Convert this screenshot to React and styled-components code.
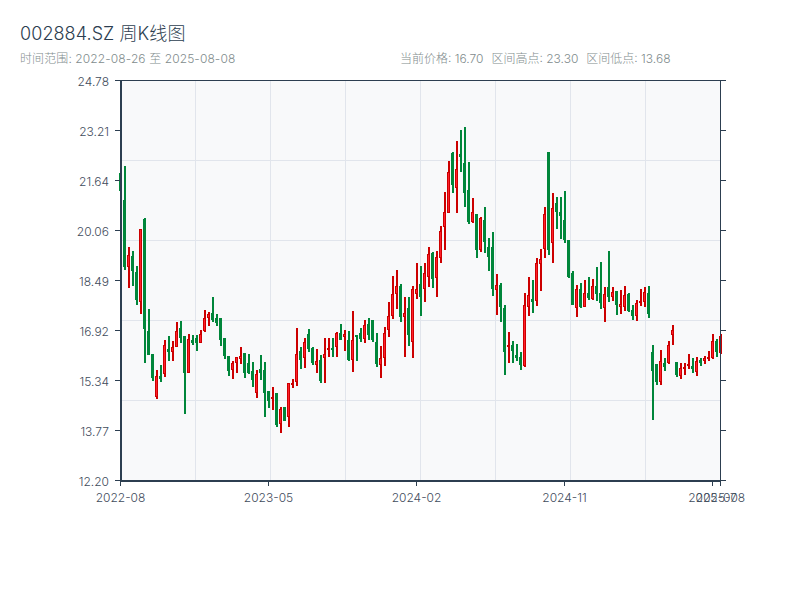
import styled, { createGlobalStyle } from 'styled-components'

const GlobalStyle = createGlobalStyle`
  html, body {
    margin: 0;
    padding: 0;
    background: #fff;
    font-family: "Inter", "Noto Sans CJK SC", sans-serif;
  }
`

const Page = styled.div`
  width: 800px;
  height: 600px;
  overflow: hidden;
`

const Header = styled.header`
  height: 70px;
  box-sizing: border-box;
  padding: 22px 20px 0;
`

const Title = styled.h1`
  margin: 0;
  font-size: 18px;
  line-height: 24px;
  font-weight: 300;
  letter-spacing: 0.08px;
  color: #2c3e50;
`

const Meta = styled.div`
  display: grid;
  grid-template-columns: 380px 380px;
  margin-top: 4px;
  font-size: 12px;
  line-height: 18px;
  font-weight: 300;
  color: #7f8c8d;
`

const Range = styled.span`
  letter-spacing: 0.1px;
`

const Stats = styled.div`
  display: flex;
  gap: 8px;
`

const Chart = styled.svg`
  display: block;
`

const Plot = styled.rect`
  fill: #f8f9fa;
`

const GridLine = styled.line`
  stroke: #e1e5ec;
  stroke-width: 1;
`

const AxisLine = styled.line`
  stroke: #2c3e50;
  stroke-width: ${(p) => p.$w || 1};
`

const AxisLabel = styled.text`
  font-size: 12px;
  font-weight: 300;
  fill: #3f4c5c;
`

const Wick = styled.rect`
  fill: ${(p) => (p.$up ? '#cc0000' : '#00863a')};
`

const Body = styled.rect`
  fill: ${(p) => (p.$up ? '#cc0000' : '#00863a')};
`

const BodyCore = styled.rect`
  fill: #ff1f2b;
`

// y in pixels of the plot: high, body top, body bottom, low, r/g
const candles = [
  [173,173,191,191,'g'],[166,200,267,270,'g'],[247,255,267,288,'r'],[251,256,271,286,'g'],[266,272,300,305,'g'],
  [229,229,302,314,'r'],[218,219,329,363,'g'],[309,331,355,355,'g'],[354,354,378,381,'g'],[370,376,397,399,'r'],
  [365,376,379,382,'g'],[340,345,374,377,'r'],[336,349,352,361,'g'],[341,347,352,361,'r'],[322,331,347,347,'r'],
  [321,328,338,343,'g'],[336,336,373,414,'g'],[334,339,373,373,'r'],[335,340,343,345,'g'],[335,338,343,351,'g'],
  [330,334,343,343,'r'],[310,318,331,332,'r'],[312,314,318,326,'r'],[297,313,320,322,'g'],[314,318,323,326,'g'],
  [318,318,340,346,'g'],[338,338,356,359,'g'],[356,356,371,376,'g'],[361,363,370,379,'r'],[357,357,363,373,'r'],
  [347,356,359,364,'r'],[353,353,373,378,'g'],[354,363,373,374,'g'],[362,371,380,387,'g'],[370,374,393,398,'r'],
  [355,369,373,380,'g'],[362,370,393,417,'g'],[391,391,401,408,'g'],[387,397,399,410,'r'],[393,393,425,427,'g'],
  [407,409,424,433,'r'],[407,407,421,421,'g'],[383,383,417,427,'r'],[379,383,385,388,'r'],[328,354,382,386,'r'],
  [347,351,360,369,'g'],[338,342,358,368,'r'],[329,334,349,352,'g'],[347,348,363,365,'g'],[349,361,365,373,'r'],
  [355,360,381,383,'g'],[338,354,358,383,'r'],[338,348,350,357,'r'],[338,348,350,357,'g'],[332,333,347,357,'r'],
  [324,333,340,340,'g'],[330,334,337,351,'r'],[331,340,360,361,'g'],[311,340,360,372,'r'],[335,335,337,361,'g'],
  [328,333,339,342,'g'],[320,325,339,343,'r'],[318,324,335,340,'g'],[320,320,340,342,'g'],[333,342,364,367,'g'],
  [346,358,365,378,'r'],[327,333,358,366,'r'],[302,316,330,337,'r'],[276,294,316,319,'r'],[270,286,294,309,'r'],
  [284,286,317,322,'g'],[297,313,317,357,'r'],[297,308,335,346,'g'],[286,289,342,358,'r'],[263,289,294,299,'r'],
  [266,284,297,316,'g'],[263,273,289,302,'r'],[247,254,277,287,'r'],[252,253,279,288,'g'],[251,257,278,297,'r'],
  [226,231,258,263,'r'],[192,212,227,250,'r'],[161,172,213,213,'r'],[152,153,185,193,'g'],[141,169,188,213,'r'],
  [130,154,157,172,'g'],[127,163,193,207,'g'],[162,190,222,224,'g'],[198,212,222,223,'r'],[214,214,250,258,'g'],
  [217,218,250,252,'r'],[207,220,242,253,'g'],[238,247,257,271,'g'],[232,247,289,296,'g'],[274,285,290,315,'r'],
  [283,285,307,322,'g'],[305,308,352,375,'g'],[332,345,347,363,'r'],[341,345,351,363,'g'],[344,355,358,361,'g'],
  [352,357,365,370,'g'],[293,305,366,367,'r'],[277,295,307,316,'r'],[280,299,302,313,'g'],[258,263,301,306,'r'],
  [249,259,264,291,'r'],[207,214,249,258,'r'],[152,152,250,255,'g'],[193,208,243,263,'r'],[197,203,212,229,'g'],
  [197,212,216,239,'g'],[191,220,240,243,'g'],[240,240,277,278,'g'],[271,273,305,305,'g'],[285,289,308,317,'r'],
  [283,289,307,308,'g'],[280,293,307,307,'r'],[277,293,298,300,'g'],[279,286,299,300,'r'],[267,286,294,301,'g'],
  [262,293,303,309,'g'],[287,294,308,322,'r'],[251,287,297,302,'g'],[287,292,297,301,'r'],[291,291,305,315,'g'],
  [290,304,307,314,'r'],[286,295,307,311,'r'],[293,294,311,312,'g'],[305,310,316,320,'g'],[300,303,316,321,'r'],
  [289,301,303,306,'r'],[287,292,302,307,'r'],[286,293,314,318,'g'],[345,352,371,420,'g'],[364,364,382,385,'g'],
  [350,361,382,385,'r'],[358,363,367,371,'g'],[341,345,363,364,'r'],[325,330,335,345,'r'],[362,362,375,377,'g'],
  [363,368,376,379,'r'],[363,367,369,375,'r'],[354,364,366,369,'r'],[358,366,369,373,'g'],[357,361,372,376,'r'],
  [358,360,363,366,'g'],[356,358,361,364,'r'],[351,357,359,361,'r'],[334,341,358,359,'r'],[339,341,352,357,'g'],
  [334,336,353,354,'r'],
]

const yLabels = ['24.78', '23.21', '21.64', '20.06', '18.49', '16.92', '15.34', '13.77', '12.20']
const xLabels = [
  ['2022-08', 120.5],
  ['2023-05', 268.5],
  ['2024-02', 416.5],
  ['2024-11', 564.5],
  ['2025-07', 712.5],
  ['2025-08', 720.5],
]
const gridX = [195.5, 270.5, 345.5, 420.5, 495.5, 570.5, 645.5]
const gridY = [160.5, 240.5, 320.5, 400.5]

const Candle = ({ index, row }) => {
  const [high, top, bottom, low, dir] = row
  const up = dir === 'r'
  const x = 121 + index * 4
  return (
    <g>
      <Wick $up={up} x={x - 1} y={high} width={2} height={low - high} />
      <Body $up={up} x={x - 2} y={top} width={3} height={Math.max(bottom - top, 1)} />
      {up && bottom - top > 2 && <BodyCore x={x - 1} y={top + 1} width={1} height={bottom - top - 2} />}
    </g>
  )
}

const App = () => {
  return (
    <Page>
      <GlobalStyle />
      <Header>
        <Title>002884.SZ 周K线图</Title>
        <Meta>
          <Range>时间范围: 2022-08-26 至 2025-08-08</Range>
          <Stats>
            <span>当前价格: 16.70</span>
            <span>区间高点: 23.30</span>
            <span>区间低点: 13.68</span>
          </Stats>
        </Meta>
      </Header>
      <Chart width="800" height="530" viewBox="0 70 800 530">
        <Plot x="121" y="81" width="599" height="399" />
        {gridX.map((x) => (
          <GridLine key={x} x1={x} x2={x} y1="81" y2="480" />
        ))}
        {gridY.map((y) => (
          <GridLine key={y} x1="121" x2="720" y1={y} y2={y} />
        ))}
        {candles.map((row, i) => (
          <Candle key={i} index={i} row={row} />
        ))}
        <AxisLine x1="115" x2="726" y1="80.5" y2="80.5" />
        <AxisLine x1="720.5" x2="720.5" y1="80" y2="481" />
        <AxisLine $w={2} x1="121" x2="121" y1="80" y2="482" />
        <AxisLine $w={2} x1="120" x2="721" y1="481" y2="481" />
        {yLabels.map((label, i) => {
          const y = 80.5 + i * 50
          return (
            <g key={label}>
              <AxisLine x1="115" x2="120" y1={y} y2={y} />
              <AxisLine x1="721" x2="726" y1={y} y2={y} />
              <AxisLabel x="109" y={y + 5.5} textAnchor="end">{label}</AxisLabel>
            </g>
          )
        })}
        {xLabels.map(([label, x]) => (
          <g key={label}>
            <AxisLine x1={x} x2={x} y1="481" y2="486" />
            <AxisLabel x={x} y="502" textAnchor="middle">{label}</AxisLabel>
          </g>
        ))}
      </Chart>
    </Page>
  )
}

export default App
